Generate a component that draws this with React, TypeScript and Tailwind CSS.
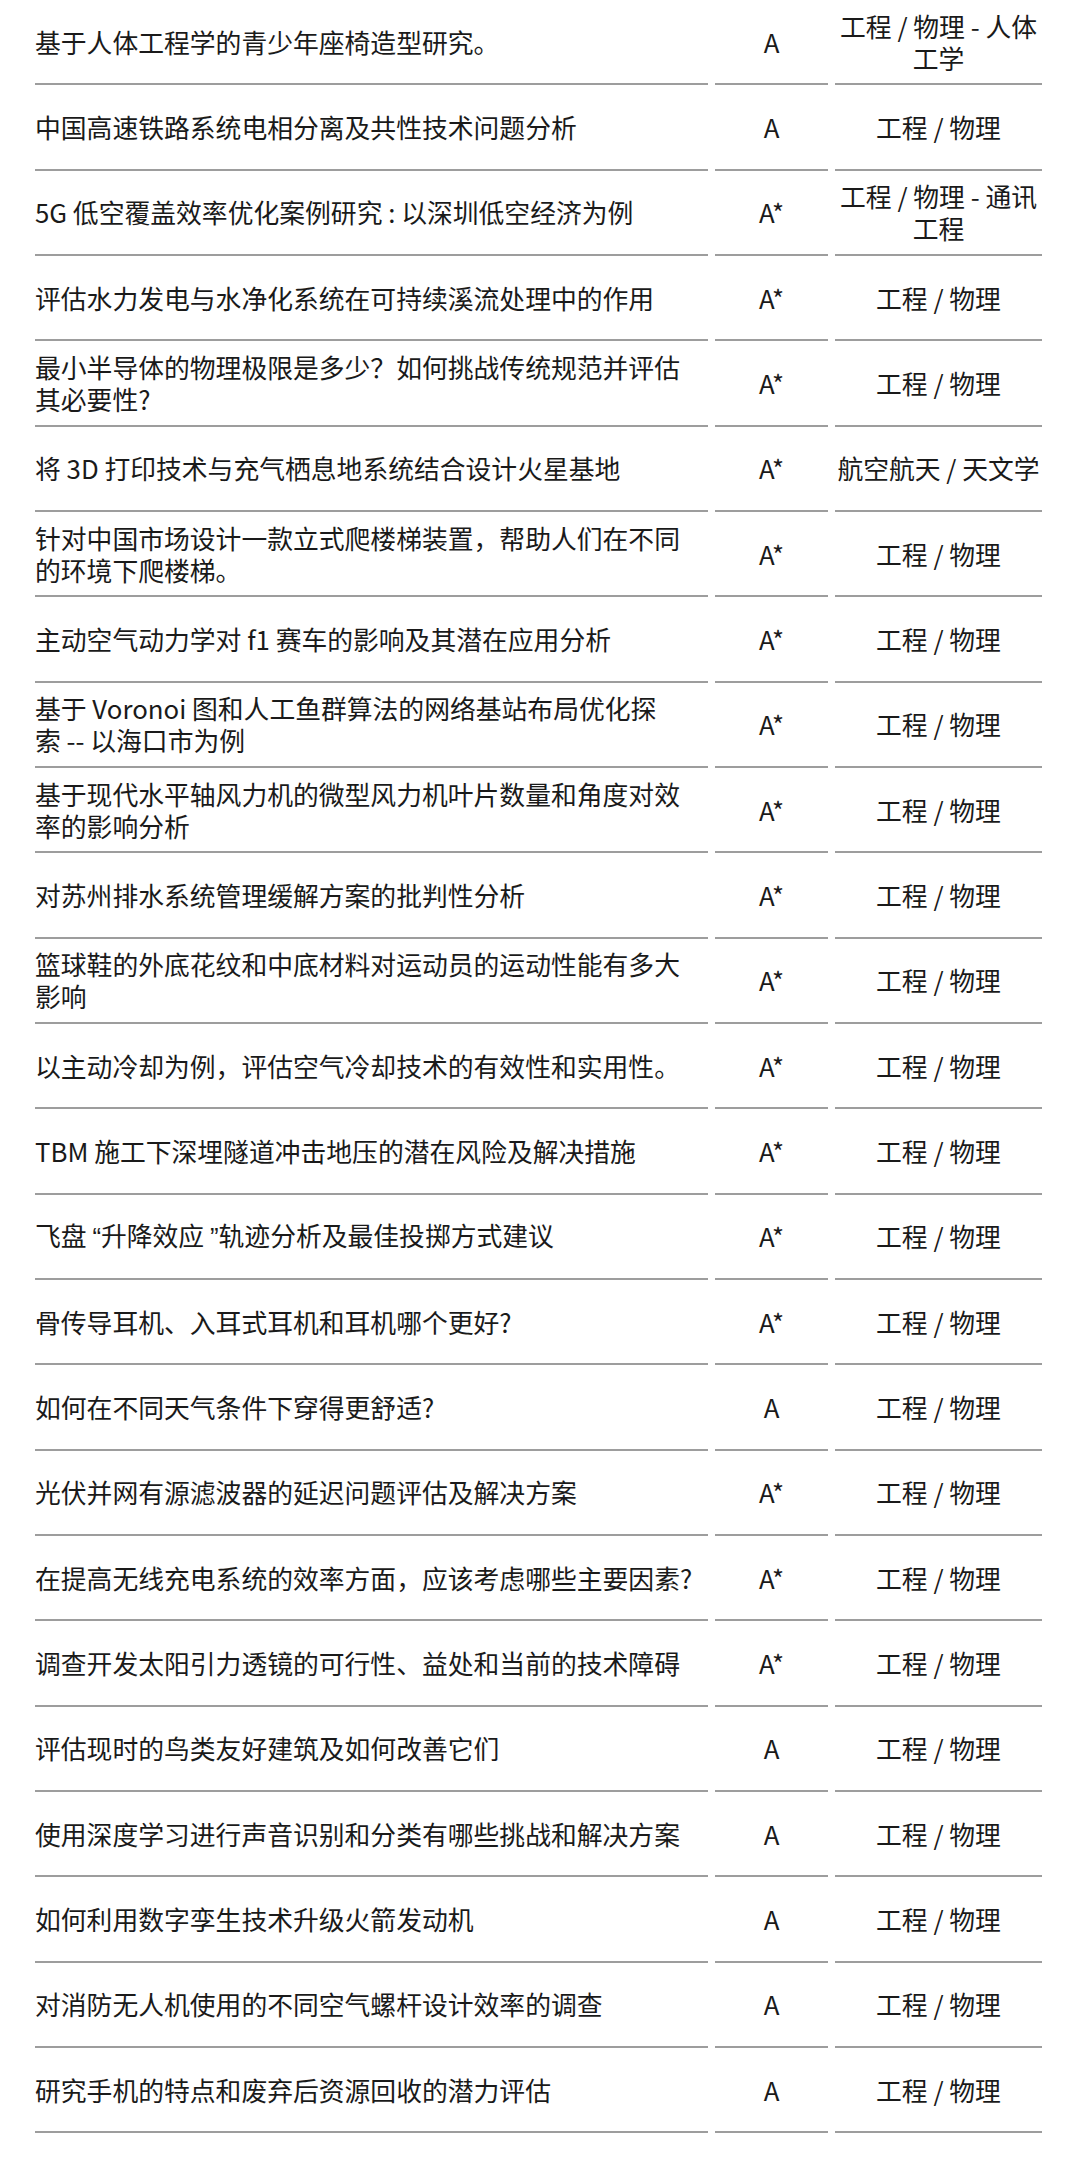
import React from "react";

type Row = { title: React.ReactNode; grade: string; subject: string };

const q = "font-['Liberation_Sans',sans-serif]";

const rows: Row[] = [
  { title: "基于人体工程学的青少年座椅造型研究。", grade: "A", subject: "工程 / 物理 - 人体工学" },
  { title: "中国高速铁路系统电相分离及共性技术问题分析", grade: "A", subject: "工程 / 物理" },
  { title: "5G 低空覆盖效率优化案例研究 : 以深圳低空经济为例", grade: "A*", subject: "工程 / 物理 - 通讯工程" },
  { title: "评估水力发电与水净化系统在可持续溪流处理中的作用", grade: "A*", subject: "工程 / 物理" },
  { title: "最小半导体的物理极限是多少？如何挑战传统规范并评估其必要性?", grade: "A*", subject: "工程 / 物理" },
  { title: "将 3D 打印技术与充气栖息地系统结合设计火星基地", grade: "A*", subject: "航空航天 / 天文学" },
  { title: "针对中国市场设计一款立式爬楼梯装置，帮助人们在不同的环境下爬楼梯。", grade: "A*", subject: "工程 / 物理" },
  { title: "主动空气动力学对 f1 赛车的影响及其潜在应用分析", grade: "A*", subject: "工程 / 物理" },
  {
    title: (
      <>
        基于 Voronoi 图和人工鱼群算法的网络基站布局优化探
        <br />
        索 -- 以海口市为例
      </>
    ),
    grade: "A*",
    subject: "工程 / 物理",
  },
  { title: "基于现代水平轴风力机的微型风力机叶片数量和角度对效率的影响分析", grade: "A*", subject: "工程 / 物理" },
  { title: "对苏州排水系统管理缓解方案的批判性分析", grade: "A*", subject: "工程 / 物理" },
  { title: "篮球鞋的外底花纹和中底材料对运动员的运动性能有多大影响", grade: "A*", subject: "工程 / 物理" },
  { title: "以主动冷却为例，评估空气冷却技术的有效性和实用性。", grade: "A*", subject: "工程 / 物理" },
  { title: "TBM 施工下深埋隧道冲击地压的潜在风险及解决措施", grade: "A*", subject: "工程 / 物理" },
  {
    title: (
      <>
        飞盘 <span className={q}>“</span>升降效应 <span className={q}>”</span>轨迹分析及最佳投掷方式建议
      </>
    ),
    grade: "A*",
    subject: "工程 / 物理",
  },
  { title: "骨传导耳机、入耳式耳机和耳机哪个更好?", grade: "A*", subject: "工程 / 物理" },
  { title: "如何在不同天气条件下穿得更舒适?", grade: "A", subject: "工程 / 物理" },
  { title: "光伏并网有源滤波器的延迟问题评估及解决方案", grade: "A*", subject: "工程 / 物理" },
  { title: "在提高无线充电系统的效率方面，应该考虑哪些主要因素?", grade: "A*", subject: "工程 / 物理" },
  { title: "调查开发太阳引力透镜的可行性、益处和当前的技术障碍", grade: "A*", subject: "工程 / 物理" },
  { title: "评估现时的鸟类友好建筑及如何改善它们", grade: "A", subject: "工程 / 物理" },
  { title: "使用深度学习进行声音识别和分类有哪些挑战和解决方案", grade: "A", subject: "工程 / 物理" },
  { title: "如何利用数字孪生技术升级火箭发动机", grade: "A", subject: "工程 / 物理" },
  { title: "对消防无人机使用的不同空气螺杆设计效率的调查", grade: "A", subject: "工程 / 物理" },
  { title: "研究手机的特点和废弃后资源回收的潜力评估", grade: "A", subject: "工程 / 物理" },
];

export default function App() {
  return (
    <div className="min-h-[2160px] w-full bg-white pl-[35px] pr-[38px] font-['Noto_Sans_CJK_SC',sans-serif] text-[25.8px] leading-[32px] text-[#1a1a1a]">
      {rows.map((r, i) => (
        <div key={i} className="grid grid-cols-[673px_113px_207px] gap-x-[7px]">
          <div className="flex h-[85.33px] items-center border-b-2 border-[#9d9d9d] pr-[9px]">
            <div>{r.title}</div>
          </div>
          <div className="flex h-[85.33px] items-center justify-center border-b-2 border-[#9d9d9d] text-center">
            {r.grade}
          </div>
          <div className="flex h-[85.33px] items-center justify-center border-b-2 border-[#9d9d9d] text-center">
            <div>{r.subject}</div>
          </div>
        </div>
      ))}
    </div>
  );
}
